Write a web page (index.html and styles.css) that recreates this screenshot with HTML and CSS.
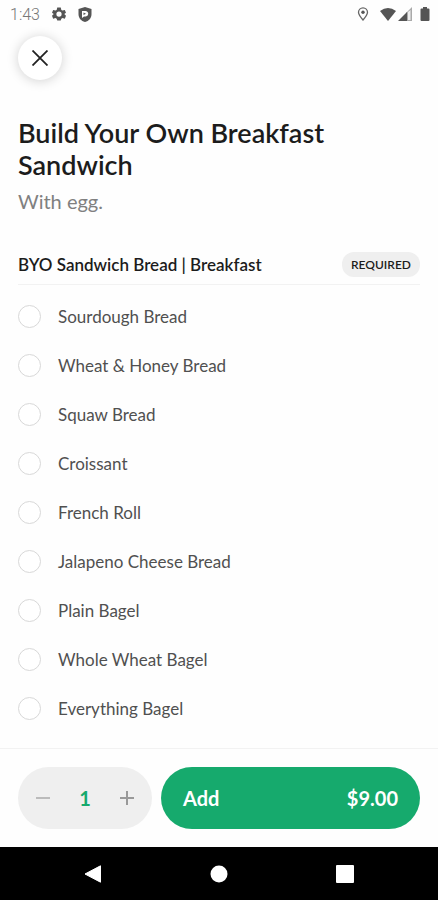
FILE: index.html
```html
<!DOCTYPE html>
<html lang="en">

<head>
    <meta charset="UTF-8">
    <meta name="viewport" content="width=device-width, initial-scale=1">
    <title>Build Your Own Breakfast Sandwich</title>
    <link rel="stylesheet" href="styles.css">
</head>

<body>
    <header class="status-bar">
        <div class="status-left">
            <span class="clock">1:43</span>
            <svg width="14" height="14" viewBox="0 0 24 24">
                <path fill="#555" fill-rule="evenodd" d="M9 1h6l1 4 2 1 4-1 2 5-3 2 3 3-2 5-4-1-2 1-1 3H9l-1-3-2-1-4 1-2-5 3-3-3-2 2-5 4 1 2-1zM12 7.500a4.500 4.500 0 1 0 0 9a4.500 4.500 0 0 0 0-9z"/>
            </svg>
            <svg width="14" height="15" viewBox="0 0 14 15">
                <path fill="#555" d="M7 0l6.500 2v5c0 4-2.500 7-6.500 8c-4-1-6.500-4-6.500-8V2z"/>
                <path fill="#fff" d="M4 4h4a2.800 2.800 0 0 1 0 5.500H6L4 11z"/>
                <path fill="#555" d="M5.500 5.500l2.500 1.300-2.500 1.300z"/>
            </svg>
        </div>
        <div class="status-right">
            <svg class="pin" width="12" height="14" viewBox="0 0 12 14">
                <path fill="none" stroke="#666" stroke-width="1.300" d="M6 13C3 9.500 1.500 7.500 1.500 5.300a4.500 4.500 0 0 1 9 0C10.500 7.500 9 9.500 6 13z"/>
                <circle cx="6" cy="5.300" r="1.700" fill="#555"/>
            </svg>
            <svg width="16" height="13" viewBox="0 0 16 13">
                <path fill="#555" d="M0 3Q8-3 16 3L8 13z"/>
            </svg>
            <svg class="signal" width="14" height="14" viewBox="0 0 14 14">
                <path fill="#aaa" d="M14 0v14H8V6z"/>
                <path fill="#555" d="M9 5v9H0z"/>
                <path fill="#eee" d="M10 5l2.500-2v10H10z"/>
            </svg>
            <svg width="10" height="14" viewBox="0 0 10 14">
                <path fill="#555" d="M3 0h4v1.500h1.500a1 1 0 0 1 1 1V13a1 1 0 0 1-1 1h-7a1 1 0 0 1-1-1V2.500a1 1 0 0 1 1-1H3z"/>
            </svg>
        </div>
    </header>

    <main class="item">
        <button class="close" type="button" aria-label="Close">
            <svg width="16" height="16" viewBox="0 0 16 16">
                <path stroke="#222" stroke-width="1.800" d="M0.500 0.500l15 15M15.500 0.500l-15 15"/>
            </svg>
        </button>
        <h1>Build Your Own Breakfast Sandwich</h1>
        <p class="description">With egg.</p>

        <section>
            <div class="group-header">
                <h2 id="bread">BYO Sandwich Bread | Breakfast</h2>
                <span class="required">REQUIRED</span>
            </div>
            <div class="options" role="radiogroup" aria-labelledby="bread">
                <label><input type="radio" name="bread">Sourdough Bread</label>
                <label><input type="radio" name="bread">Wheat &amp; Honey Bread</label>
                <label><input type="radio" name="bread">Squaw Bread</label>
                <label><input type="radio" name="bread">Croissant</label>
                <label><input type="radio" name="bread">French Roll</label>
                <label><input type="radio" name="bread">Jalapeno Cheese Bread</label>
                <label><input type="radio" name="bread">Plain Bagel</label>
                <label><input type="radio" name="bread">Whole Wheat Bagel</label>
                <label><input type="radio" name="bread">Everything Bagel</label>
            </div>
        </section>
    </main>

    <footer class="order-bar">
        <div class="quantity">
            <button class="minus" type="button" aria-label="Decrease quantity">
                <svg width="14" height="14" viewBox="0 0 14 14"><path stroke="currentColor" stroke-width="2" d="M0 7h14"/></svg>
            </button>
            <span class="count">1</span>
            <button class="plus" type="button" aria-label="Increase quantity">
                <svg width="14" height="14" viewBox="0 0 14 14"><path stroke="currentColor" stroke-width="2" d="M0 7h14M7 0v14"/></svg>
            </button>
        </div>
        <button class="add" type="button"><span>Add</span><span>$9.00</span></button>
    </footer>

    <nav class="system-nav">
        <button type="button" aria-label="Back">
            <svg width="18" height="18" viewBox="0 0 18 18"><path fill="#fff" stroke="#fff" stroke-linejoin="round" d="M1 9L16.500 0.800v16.400z"/></svg>
        </button>
        <button type="button" aria-label="Home">
            <svg width="18" height="18" viewBox="0 0 18 18"><circle cx="9" cy="9" r="8.500" fill="#fff"/></svg>
        </button>
        <button type="button" aria-label="Recent apps">
            <svg width="18" height="18" viewBox="0 0 18 18"><rect width="18" height="18" rx="1" fill="#fff"/></svg>
        </button>
    </nav>
</body>

</html>
```

FILE: styles.css
```css
* {
    box-sizing: border-box;
    margin: 0;
    padding: 0;
}
body {
    display: flex;
    flex-direction: column;
    min-height: 100vh;
    background: #fefefe;
    color: #1c1c1c;
    font-family: Lato, "Liberation Sans", sans-serif;
}
button {
    border: 0;
    background: none;
    font: inherit;
    cursor: pointer;
}
svg {
    display: block;
}
.status-bar {
    display: flex;
    justify-content: space-between;
    height: 28px;
    padding: 0 8px 0 10px;
}
.status-left,
.status-right {
    display: flex;
    align-items: center;
}
.status-left {
    gap: 12px;
}
.clock {
    color: #777;
    font-family: Roboto, sans-serif;
    font-size: 16px;
    font-weight: 300;
}
.pin {
    margin-right: 11px;
}
.signal {
    margin: 0 8px 0 2px;
}
.item {
    flex: 1;
    padding: 8px 18px 15px;
}
.close {
    display: flex;
    align-items: center;
    justify-content: center;
    width: 44px;
    height: 44px;
    margin-bottom: 37px;
    border-radius: 50%;
    background: #fff;
    box-shadow: 0 1px 12px rgba(0, 0, 0, 0.18);
}
h1 {
    font-size: 27px;
    font-weight: 600;
    line-height: 32px;
}
.description {
    margin-top: 8px;
    color: #808080;
    font-size: 20px;
    line-height: 24px;
}
.group-header {
    display: flex;
    align-items: center;
    justify-content: space-between;
    margin-top: 32px;
    padding: 7px 0;
    border-bottom: 1px solid #f2f2f2;
}
h2 {
    font-size: 17px;
    font-weight: 600;
    line-height: 24px;
}
.required {
    padding: 0 9px;
    border-radius: 12px;
    background: #efefef;
    font-size: 12px;
    font-weight: 600;
    line-height: 25px;
}
.options {
    padding-top: 7px;
}
.options label {
    display: flex;
    align-items: center;
    gap: 17px;
    height: 49px;
    color: #505050;
    font-size: 17px;
}
.options input {
    width: 23px;
    height: 23px;
    border: 1px solid #d8d8d8;
    border-radius: 50%;
    background: #fff;
    appearance: none;
}
.options input:checked {
    border: 7px solid #16aa6d;
}
.order-bar {
    display: flex;
    gap: 9px;
    padding: 18px 18px;
    border-top: 1px solid #f2f2f2;
    font-size: 20px;
    font-weight: 700;
}
.quantity {
    display: flex;
    align-items: center;
    justify-content: space-between;
    width: 134px;
    height: 62px;
    padding: 0 10px;
    border-radius: 31px;
    background: #efefef;
}
.quantity button {
    padding: 8px;
}
.minus {
    color: #bbb;
}
.plus {
    color: #999;
}
.count {
    color: #16aa6d;
}
.add {
    display: flex;
    flex: 1;
    align-items: center;
    justify-content: space-between;
    padding: 0 22px;
    border-radius: 31px;
    background: #16aa6d;
    color: #fff;
}
.system-nav {
    display: flex;
    align-items: center;
    justify-content: center;
    gap: 92px;
    height: 53px;
    background: #000;
}
.system-nav button {
    padding: 8px;
}
```
